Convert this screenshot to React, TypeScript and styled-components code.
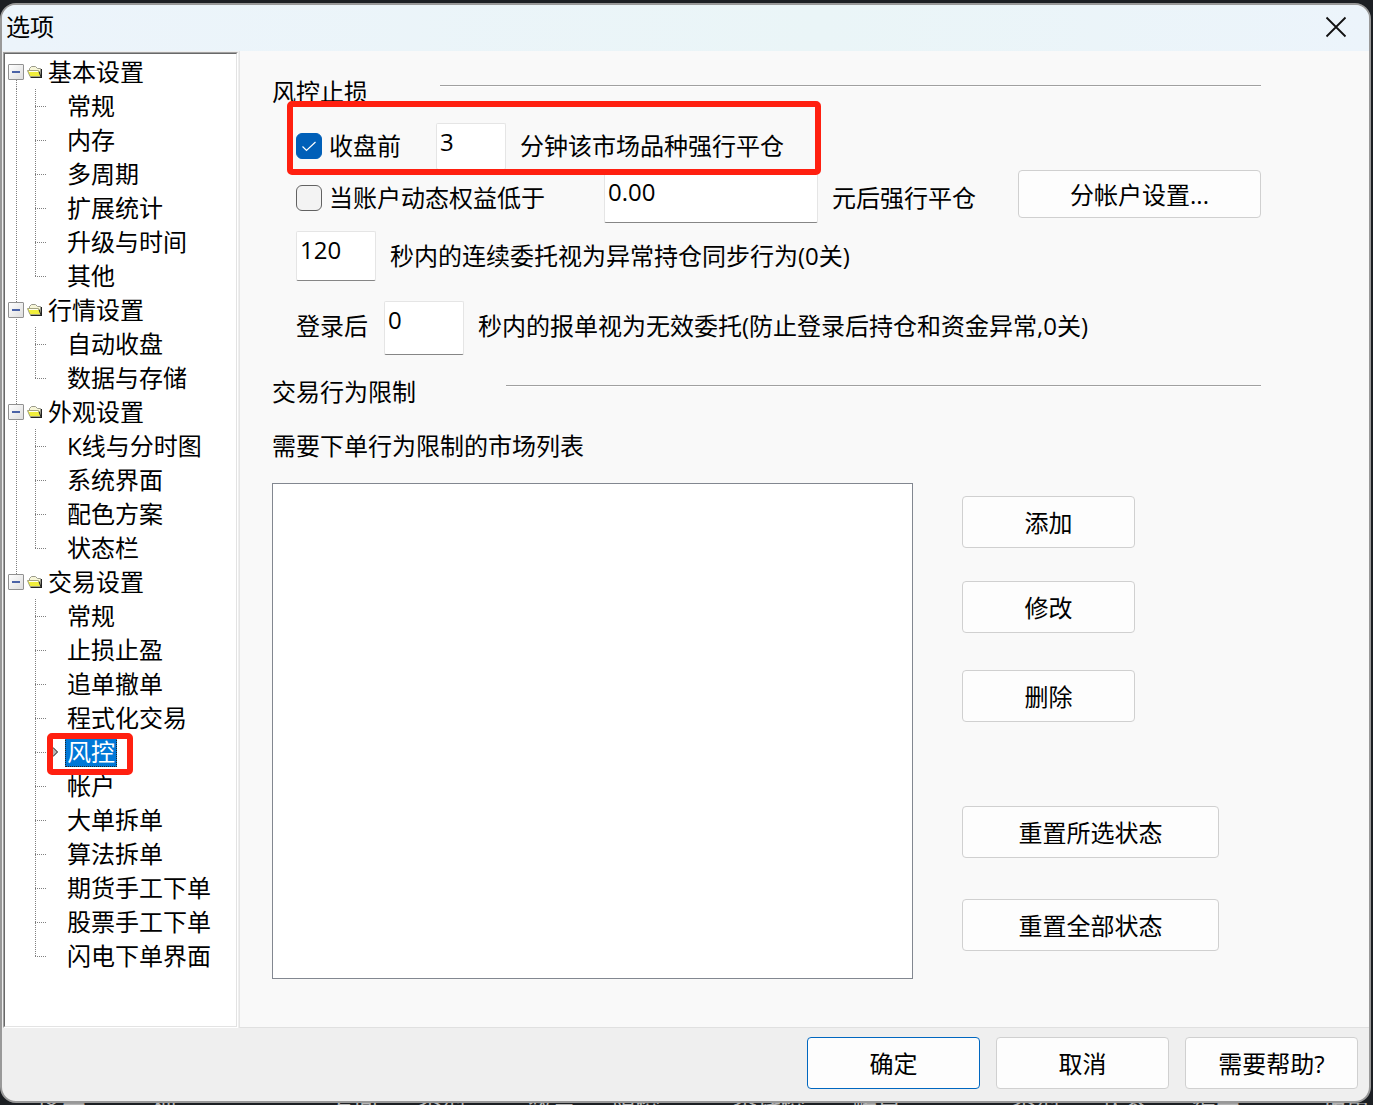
import React, { useState } from 'react';
import styled, { createGlobalStyle, css } from 'styled-components';

const GlobalStyle = createGlobalStyle`
  *, *::before, *::after { box-sizing: border-box; }
  body { margin: 0; background: #1c1f23; }
  body, button, input, select {
    font-family: "Open Sans", "Noto Sans CJK SC", sans-serif;
    font-size: 24px;
    color: #000;
  }
  ul { list-style: none; margin: 0; padding: 0; }
`;

const Desktop = styled.div`
  min-height: 100vh;
  display: flex;
  flex-direction: column;
  padding: 3px 2px 0 0;
  background: #1c1f23;
`;

const Dialog = styled.section`
  flex: 1;
  display: flex;
  flex-direction: column;
  border: 2px solid #999;
  border-radius: 16px;
  overflow: hidden;
  background: #efefef;
`;

const TitleBar = styled.header`
  height: 46px;
  display: flex;
  align-items: center;
  justify-content: space-between;
  padding: 0 22px 2px 4px;
  background: linear-gradient(90deg, #ecf4fb, #eaf5f7 60%, #ecf4fb);
`;

const Title = styled.h1`
  margin: 0;
  font-size: 24px;
  font-weight: 400;
  line-height: 44px;
`;

const CloseButton = styled.button`
  display: flex;
  padding: 0;
  border: 0;
  background: none;
`;

const Body = styled.div`
  flex: 1;
  display: flex;
`;

const TreePanel = styled.nav`
  width: 235px;
  flex: none;
  margin: 1px 1px 0 1px;
  border: 1px solid;
  border-color: #a0a0a0 #fff #fff #a0a0a0;
  background: #fff;
`;

const TreeInner = styled.div`
  height: 100%;
  padding-top: 1px;
  border: 1px solid;
  border-color: #696969 #e3e3e3 #e3e3e3 #696969;
`;

const vDots = 'repeating-linear-gradient(180deg, #808080 0 1px, transparent 1px 2px)';
const hDots = 'repeating-linear-gradient(90deg, #808080 0 1px, transparent 1px 2px)';

const TreeRow = styled.div`
  position: relative;
  display: flex;
  align-items: center;
  height: 34px;
`;

const Trunk = styled.span<{ $from: string; $to: string }>`
  width: 22px;
  height: 34px;
  flex: none;
  display: flex;
  align-items: center;
  padding-left: 3px;
  background: ${vDots} no-repeat 11px ${(p) => p.$from} / 1px ${(p) => p.$to};
`;

const Branch = styled.span<{ $last: boolean }>`
  width: 21px;
  height: 34px;
  flex: none;
  background:
    ${vDots} no-repeat 8px 0 / 1px ${(p) => (p.$last ? '17px' : '34px')},
    ${hDots} no-repeat 8px 17px / 11px 1px;
`;

const MarkerCell = styled.span`
  width: 17px;
  flex: none;
  display: flex;
  padding-left: 3px;
`;

const Expander = styled.button`
  width: 16px;
  height: 16px;
  display: flex;
  align-items: center;
  justify-content: center;
  padding: 0;
  border: 1px solid #919191;
  border-radius: 1px;
  background: linear-gradient(135deg, #fff, #dedede);

  &::before {
    content: '';
    width: 8px;
    height: 2px;
    background: #4b63a7;
  }
`;

const FolderIcon = styled.svg`
  flex: none;
  margin-right: 5px;
`;

const NodeLabel = styled.button<{ $active?: boolean }>`
  padding: 0 2px;
  border: 0;
  background: none;
  line-height: 30px;
  white-space: nowrap;
  ${(p) =>
    p.$active &&
    css`
      padding: 0 1px;
      border: 1px dotted #222;
      line-height: 28px;
      background: #0078d7;
      color: #fff;
    `}
`;

const GroupLabel = styled(NodeLabel)`
  padding: 0;
`;

const NodeHighlight = styled.span`
  position: absolute;
  left: 42px;
  top: -2px;
  width: 86px;
  height: 42px;
  border: 6px solid #ff2010;
  border-radius: 5px;
  z-index: 1;
  pointer-events: none;
`;

const Page = styled.main`
  flex: 1;
  display: flex;
  flex-direction: column;
  padding: 23px 108px 48px 32px;
  border-left: 1px solid #e5e5e5;
  border-bottom: 1px solid #e0e0e0;
  background: #f9f9f9;
`;

const SectionHeader = styled.div<{ $titleWidth: number }>`
  display: grid;
  grid-template-columns: ${(p) => p.$titleWidth}px 1fr;
  height: 36px;
`;

const SectionTitle = styled.h2`
  margin: 0;
  font-size: 24px;
  font-weight: 400;
  line-height: 36px;
`;

const Rule = styled.hr`
  width: 100%;
  height: 2px;
  margin: 11px 0 0;
  border: 0;
  border-top: 1px solid #a0a0a0;
  background: #fff;
`;

const Fields = styled.div`
  position: relative;
  padding: 13px 0 19px 24px;
`;

const FieldRow = styled.div<{ $height: number; $line: number; $below?: number }>`
  display: flex;
  align-items: flex-start;
  gap: 14px;
  height: ${(p) => p.$height}px;
  line-height: ${(p) => p.$line}px;
  margin-bottom: ${(p) => p.$below ?? 0}px;
  white-space: nowrap;
`;

const CheckLabel = styled.label<{ $width: number }>`
  width: ${(p) => p.$width}px;
  display: flex;
  align-items: center;
  gap: 7px;
`;

const PrefixLabel = styled.label`
  width: 74px;
`;

const CheckBoxFrame = styled.span`
  display: grid;
  flex: none;

  > * {
    grid-area: 1 / 1;
  }

  > svg {
    pointer-events: none;
  }
`;

const CheckBox = styled.input`
  appearance: none;
  width: 26px;
  height: 26px;
  margin: 0;
  border: 1px solid #626262;
  border-radius: 6px;
  background: #f3f3f3;

  &:checked {
    border-color: #005fb8;
    background: #005fb8;
  }
`;

const TextBox = styled.input<{ $width: number; $tail?: number }>`
  width: ${(p) => p.$width}px;
  height: 100%;
  flex: none;
  padding: 0 3px ${(p) => p.$tail ?? 10}px;
  border: 1px solid #e5e5e5;
  border-bottom-color: #868686;
  border-radius: 2px;
  background: #fff;
  outline: 0;
`;

const FieldsHighlight = styled.div`
  position: absolute;
  left: 15px;
  top: -9px;
  width: 534px;
  height: 74px;
  border: 6px solid #ff2010;
  border-radius: 5px;
  pointer-events: none;
`;

const PushButton = styled.button<{ $width: number; $primary?: boolean; $height?: number; $above?: number }>`
  width: ${(p) => p.$width}px;
  height: ${(p) => p.$height ?? 52}px;
  flex: none;
  margin-top: ${(p) => p.$above ?? 0}px;
  padding: 0 0 2px;
  border: 1px solid ${(p) => (p.$primary ? '#0067c0' : '#d0d0d0')};
  border-radius: 4px;
  background: #fdfdfd;
  white-space: nowrap;
`;

const AccountButton = styled(PushButton)`
  margin-left: auto;
`;

const ListLabel = styled.label`
  margin: 18px 0 19px;
  line-height: 36px;
`;

const ListArea = styled.div`
  flex: 1;
  display: flex;
  gap: 49px;
`;

const MarketList = styled.select`
  flex: 1;
  min-height: 496px;
  border: 1px solid #828790;
  border-radius: 0;
  background: #fff;
  outline: 0;
`;

const Actions = styled.div`
  width: 299px;
  display: flex;
  flex-direction: column;
  padding-top: 13px;
`;

const Footer = styled.footer`
  display: flex;
  justify-content: flex-end;
  gap: 16px;
  padding: 9px 11px 12px;
`;

const BackgroundStrip = styled.div`
  display: flex;
  height: 3px;
  padding-left: 38px;
  overflow: hidden;
  line-height: 3px;
  color: #b4b4b4;
`;

const StripCell = styled.span<{ $width: number }>`
  width: ${(p) => p.$width}px;
  flex: none;
  white-space: nowrap;
`;

const tree = [
  { name: '基本设置', items: ['常规', '内存', '多周期', '扩展统计', '升级与时间', '其他'] },
  { name: '行情设置', items: ['自动收盘', '数据与存储'] },
  { name: '外观设置', items: ['K线与分时图', '系统界面', '配色方案', '状态栏'] },
  {
    name: '交易设置',
    items: [
      '常规', '止损止盈', '追单撤单', '程式化交易', '风控', '帐户',
      '大单拆单', '算法拆单', '期货手工下单', '股票手工下单', '闪电下单界面',
    ],
  },
];

const columns: [string, number][] = [
  ['序号', 90], ['品种', 202], ['方向', 88], ['类型', 110], ['数量', 84], ['限价', 121],
  ['委托价', 120], ['帐户', 159], ['类型', 88], ['状态', 92], ['编号', 130], ['报单', 50],
];

function Folder() {
  return (
    <FolderIcon width="16" height="14" viewBox="0 0 16 14" aria-hidden="true">
      <path d="M2.500 6V3.500L4.500 1.500H8.500L10.500 3.500H13.500V11H3Z" fill="#f7f6d8" stroke="#9a9a8c" />
      <path d="M.500 5.500H11.500L14 11.500H3Z" fill="#f0ee3c" stroke="#a3a382" />
      <path d="M2 6.500H11.500" stroke="#fffff0" />
      <path d="M3.500 12.500H15M14.500 4V12.500M12 6.500L14 12" fill="none" stroke="#222" />
    </FolderIcon>
  );
}

function Check({ checked, onChange }: { checked: boolean; onChange: (v: boolean) => void }) {
  return (
    <CheckBoxFrame>
      <CheckBox type="checkbox" checked={checked} onChange={(e) => onChange(e.target.checked)} />
      {checked && (
        <svg width="26" height="26" viewBox="0 0 26 26" aria-hidden="true">
          <path d="M6.500 13.500L10.500 17.500L19.500 9" fill="none" stroke="#fff" strokeWidth="1.200" />
        </svg>
      )}
    </CheckBoxFrame>
  );
}

export default function App() {
  const [beforeClose, setBeforeClose] = useState(true);
  const [lowEquity, setLowEquity] = useState(false);

  return (
    <>
      <GlobalStyle />
      <Desktop>
        <Dialog aria-label="选项">
          <TitleBar>
            <Title>选项</Title>
            <CloseButton type="button" aria-label="关闭">
              <svg width="22" height="22" viewBox="0 0 22 22" aria-hidden="true">
                <path d="M1.500 1.500L20.500 20.500M20.500 1.500L1.500 20.500" stroke="#111" strokeWidth="1.800" />
              </svg>
            </CloseButton>
          </TitleBar>
          <Body>
            <TreePanel>
              <TreeInner>
                <ul>
                  {tree.map((group, g) => {
                    const lastGroup = g === tree.length - 1;
                    return (
                      <li key={group.name}>
                        <TreeRow>
                          <Trunk $from={g === 0 ? '17px' : '0'} $to={lastGroup ? '17px' : '34px'}>
                            <Expander type="button" aria-label={`折叠${group.name}`} />
                          </Trunk>
                          <Folder />
                          <GroupLabel type="button">{group.name}</GroupLabel>
                        </TreeRow>
                        <ul>
                          {group.items.map((item, i) => {
                            const active = item === '风控';
                            return (
                              <li key={item}>
                                <TreeRow>
                                  <Trunk $from="0" $to={lastGroup ? '0' : '34px'} />
                                  <Branch $last={i === group.items.length - 1} />
                                  <MarkerCell>
                                    {active && (
                                      <svg width="8" height="10" viewBox="0 0 8 10" aria-hidden="true">
                                        <path d="M2 0L7 5L2 10Z" fill="#b8b8b8" />
                                        <path d="M2 .500L6.500 5L2 9.500" fill="none" stroke="#222" />
                                      </svg>
                                    )}
                                  </MarkerCell>
                                  <NodeLabel type="button" $active={active}>{item}</NodeLabel>
                                  {active && <NodeHighlight />}
                                </TreeRow>
                              </li>
                            );
                          })}
                        </ul>
                      </li>
                    );
                  })}
                </ul>
              </TreeInner>
            </TreePanel>

            <Page>
              <SectionHeader $titleWidth={168}>
                <SectionTitle>风控止损</SectionTitle>
                <Rule />
              </SectionHeader>

              <Fields>
                <FieldRow $height={47} $line={46}>
                  <CheckLabel $width={126}>
                    <Check checked={beforeClose} onChange={setBeforeClose} />
                    收盘前
                  </CheckLabel>
                  <TextBox $width={70} id="minutes" defaultValue="3" />
                  <label htmlFor="minutes">分钟该市场品种强行平仓</label>
                </FieldRow>
                <FieldRow $height={53} $line={56} $below={8}>
                  <CheckLabel $width={294}>
                    <Check checked={lowEquity} onChange={setLowEquity} />
                    当账户动态权益低于
                  </CheckLabel>
                  <TextBox $width={214} id="equity" defaultValue="0.00" />
                  <label htmlFor="equity">元后强行平仓</label>
                  <AccountButton type="button" $width={243} $height={48}>分帐户设置...</AccountButton>
                </FieldRow>
                <FieldRow $height={50} $line={50} $below={20}>
                  <TextBox $width={80} $tail={14} id="orders" defaultValue="120" />
                  <label htmlFor="orders">秒内的连续委托视为异常持仓同步行为(0关)</label>
                </FieldRow>
                <FieldRow $height={54} $line={50}>
                  <PrefixLabel htmlFor="login">登录后</PrefixLabel>
                  <TextBox $width={80} $tail={18} id="login" defaultValue="0" />
                  <label htmlFor="login">秒内的报单视为无效委托(防止登录后持仓和资金异常,0关)</label>
                </FieldRow>
                <FieldsHighlight />
              </Fields>

              <SectionHeader $titleWidth={234}>
                <SectionTitle>交易行为限制</SectionTitle>
                <Rule />
              </SectionHeader>
              <ListLabel htmlFor="markets">需要下单行为限制的市场列表</ListLabel>
              <ListArea>
                <MarketList id="markets" size={8} />
                <Actions>
                  <PushButton type="button" $width={173}>添加</PushButton>
                  <PushButton type="button" $width={173} $above={33}>修改</PushButton>
                  <PushButton type="button" $width={173} $above={37}>删除</PushButton>
                  <PushButton type="button" $width={257} $above={84}>重置所选状态</PushButton>
                  <PushButton type="button" $width={257} $above={41}>重置全部状态</PushButton>
                </Actions>
              </ListArea>
            </Page>
          </Body>
          <Footer>
            <PushButton type="button" $width={173} $primary>确定</PushButton>
            <PushButton type="button" $width={173}>取消</PushButton>
            <PushButton type="button" $width={173}>需要帮助?</PushButton>
          </Footer>
        </Dialog>
        <BackgroundStrip aria-hidden="true">
          {columns.map(([name, width], i) => (
            <StripCell key={i} $width={width}>{name}</StripCell>
          ))}
        </BackgroundStrip>
      </Desktop>
    </>
  );
}
